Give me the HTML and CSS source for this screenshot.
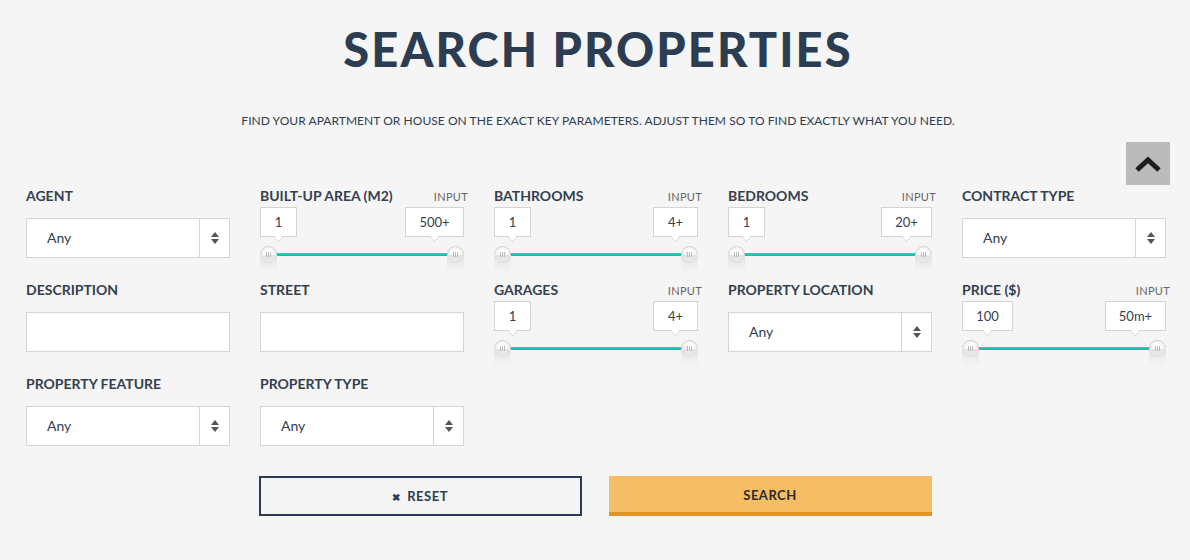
FILE: index.html
```html
<!DOCTYPE html>
<html>
<head>
<meta charset="utf-8">
<link rel="stylesheet" href="styles.css">
</head>
<body>
<div class="page">
  <h1 class="title">SEARCH PROPERTIES</h1>
  <p class="subtitle">FIND YOUR APARTMENT OR HOUSE ON THE EXACT KEY PARAMETERS. ADJUST THEM SO TO FIND EXACTLY WHAT YOU NEED.</p>
  <div class="totop-row">
    <a class="totop" href="#"><svg width="28" height="18" viewBox="0 0 28 18"><path d="M3 15 L14 5 L25 15" fill="none" stroke="#1e1e1e" stroke-width="5" stroke-linejoin="miter"/></svg></a>
  </div>
  <div class="grid">
    <div class="field">
      <div class="label-row"><span class="label">AGENT</span></div>
      <div class="select"><span class="sel-val">Any</span><span class="sel-arrow"><i class="up"></i><i class="down"></i></span></div>
    </div>
    <div class="field">
      <div class="label-row"><span class="label">BUILT-UP AREA (M2)</span><span class="input-tag">INPUT</span></div>
      <div class="slider">
        <div class="vals"><span class="val">1</span><span class="val wide">500+</span></div>
        <div class="track"><span class="thumb"></span><span class="bar"></span><span class="thumb"></span></div>
      </div>
    </div>
    <div class="field">
      <div class="label-row"><span class="label">BATHROOMS</span><span class="input-tag">INPUT</span></div>
      <div class="slider">
        <div class="vals"><span class="val">1</span><span class="val mid">4+</span></div>
        <div class="track"><span class="thumb"></span><span class="bar"></span><span class="thumb"></span></div>
      </div>
    </div>
    <div class="field">
      <div class="label-row"><span class="label">BEDROOMS</span><span class="input-tag">INPUT</span></div>
      <div class="slider">
        <div class="vals"><span class="val">1</span><span class="val w20">20+</span></div>
        <div class="track"><span class="thumb"></span><span class="bar"></span><span class="thumb"></span></div>
      </div>
    </div>
    <div class="field">
      <div class="label-row"><span class="label">CONTRACT TYPE</span></div>
      <div class="select"><span class="sel-val">Any</span><span class="sel-arrow"><i class="up"></i><i class="down"></i></span></div>
    </div>

    <div class="field">
      <div class="label-row"><span class="label">DESCRIPTION</span></div>
      <div class="text-input"></div>
    </div>
    <div class="field">
      <div class="label-row"><span class="label">STREET</span></div>
      <div class="text-input"></div>
    </div>
    <div class="field">
      <div class="label-row"><span class="label">GARAGES</span><span class="input-tag">INPUT</span></div>
      <div class="slider">
        <div class="vals"><span class="val">1</span><span class="val mid">4+</span></div>
        <div class="track"><span class="thumb"></span><span class="bar"></span><span class="thumb"></span></div>
      </div>
    </div>
    <div class="field">
      <div class="label-row"><span class="label">PROPERTY LOCATION</span></div>
      <div class="select"><span class="sel-val">Any</span><span class="sel-arrow"><i class="up"></i><i class="down"></i></span></div>
    </div>
    <div class="field">
      <div class="label-row"><span class="label">PRICE ($)</span><span class="input-tag">INPUT</span></div>
      <div class="slider">
        <div class="vals"><span class="val w100">100</span><span class="val w50">50m+</span></div>
        <div class="track"><span class="thumb"></span><span class="bar"></span><span class="thumb"></span></div>
      </div>
    </div>

    <div class="field">
      <div class="label-row"><span class="label">PROPERTY FEATURE</span></div>
      <div class="select"><span class="sel-val">Any</span><span class="sel-arrow"><i class="up"></i><i class="down"></i></span></div>
    </div>
    <div class="field">
      <div class="label-row"><span class="label">PROPERTY TYPE</span></div>
      <div class="select"><span class="sel-val">Any</span><span class="sel-arrow"><i class="up"></i><i class="down"></i></span></div>
    </div>
  </div>
  <div class="buttons">
    <button class="btn reset"><span class="x">&#x2716;</span> RESET</button>
    <button class="btn search">SEARCH</button>
  </div>
</div>
</body>
</html>
```

FILE: styles.css
```css
* { box-sizing: border-box; }
html, body { margin: 0; padding: 0; }
body {
  background: #f5f5f5;
  font-family: "Lato", "Open Sans", sans-serif;
  color: #2e3d50;
  width: 1190px;
  height: 560px;
  overflow: hidden;
}
.page { padding: 0 20px 0 26px; }
.title {
  margin: 0;
  padding-top: 26px;
  text-align: center;
  font-family: "Lato", sans-serif;
  font-weight: 900;
  font-size: 47px;
  line-height: 46px;
  letter-spacing: 2.1px;
  color: #2c3d52;
}
.subtitle {
  margin: 41px 0 0;
  text-align: center;
  font-size: 12px;
  line-height: 16px;
  color: #2e3d50;
  letter-spacing: 0.05px;
}
.totop-row { display: flex; justify-content: flex-end; margin-top: 13px; height: 44px; }
.totop {
  width: 44px; height: 43px;
  background: #bbbbbb;
  display: flex; align-items: center; justify-content: center;
}
.grid {
  display: grid;
  grid-template-columns: repeat(5, 208px);
  grid-auto-rows: 94px;
  column-gap: 26px;
  margin-top: 0;
}
.field { display: flex; flex-direction: column; }
.label-row {
  display: flex; justify-content: space-between; align-items: baseline;
  height: 20px;
}
.label { font-size: 14px; font-weight: 700; line-height: 20px; color: #34404f; }
.input-tag { font-size: 11px; color: #666; line-height: 20px; letter-spacing: 0.3px; }
.select, .text-input {
  margin-top: 12px;
  width: 204px; height: 40px;
  background: #fff;
  border: 1px solid #d5d5d5;
}
.select { display: flex; }
.sel-val { flex: 1; padding-left: 20px; font-size: 14px; line-height: 38px; color: #34404f; }
.sel-arrow {
  width: 30px; border-left: 1px solid #d5d5d5;
  display: flex; flex-direction: column; align-items: center; justify-content: center; gap: 2px;
}
.sel-arrow i { width: 0; height: 0; border-left: 4.5px solid transparent; border-right: 4.5px solid transparent; }
.sel-arrow .up { border-bottom: 5px solid #555; }
.sel-arrow .down { border-top: 5px solid #555; }

.slider { margin-top: 1px; width: 204px; }
.vals { display: flex; justify-content: space-between; height: 37px; }
.val {
  position: relative;
  height: 30px; min-width: 37px; padding: 0 8px;
  background: #fff; border: 1px solid #d3d3d3;
  font-size: 13px; line-height: 28px; text-align: center; color: #34404f;
}
.val::after {
  content: ""; position: absolute; left: 50%; bottom: -6px; margin-left: -5px;
  width: 8px; height: 8px; background: #fff;
  border-right: 1px solid #d3d3d3; border-bottom: 1px solid #d3d3d3;
  transform: rotate(45deg) scale(0.7);
}
.val.wide { width: 59px; }
.val.mid { width: 45px; }
.val.w20 { width: 51px; }
.val.w100 { width: 51px; }
.val.w50 { width: 61px; }
.track { display: flex; align-items: center; height: 20px; position: relative; }
.bar { flex: 1; height: 3px; background: linear-gradient(#22d6c0, #12b9a5); margin: 0 -1px; }
.thumb {
  position: relative; z-index: 1;
  width: 17px; height: 17px; border-radius: 50%;
  background: radial-gradient(circle at 50% 40%, #fff, #ececec);
  border: 1px solid #cfcfcf;
}
.thumb::before {
  content: ""; position: absolute; left: 5px; top: 5px; width: 5px; height: 5px;
  background: repeating-linear-gradient(90deg, #bbb 0 1px, transparent 1px 2px);
}
.thumb::after {
  content: ""; position: absolute; left: -1px; top: 8px; width: 17px; height: 17px; z-index: -1;
  background: linear-gradient(#e3e3e3, rgba(245,245,245,0));
}

.buttons { display: flex; justify-content: center; gap: 27px; margin-top: 8px; margin-left: -6px; }
.btn {
  width: 323px; height: 40px; font-family: "Lato", sans-serif;
  font-size: 13px; font-weight: 700; letter-spacing: 0.5px; cursor: pointer;
}
.reset { background: transparent; border: 2px solid #2c3d52; color: #2c3d52; }
.reset .x { font-size: 10px; margin-right: 3px; }
.search { background: #f4bd66; border: 0; border-bottom: 4px solid #df9529; color: #2b2b2b; padding-top: 3px; }
```
